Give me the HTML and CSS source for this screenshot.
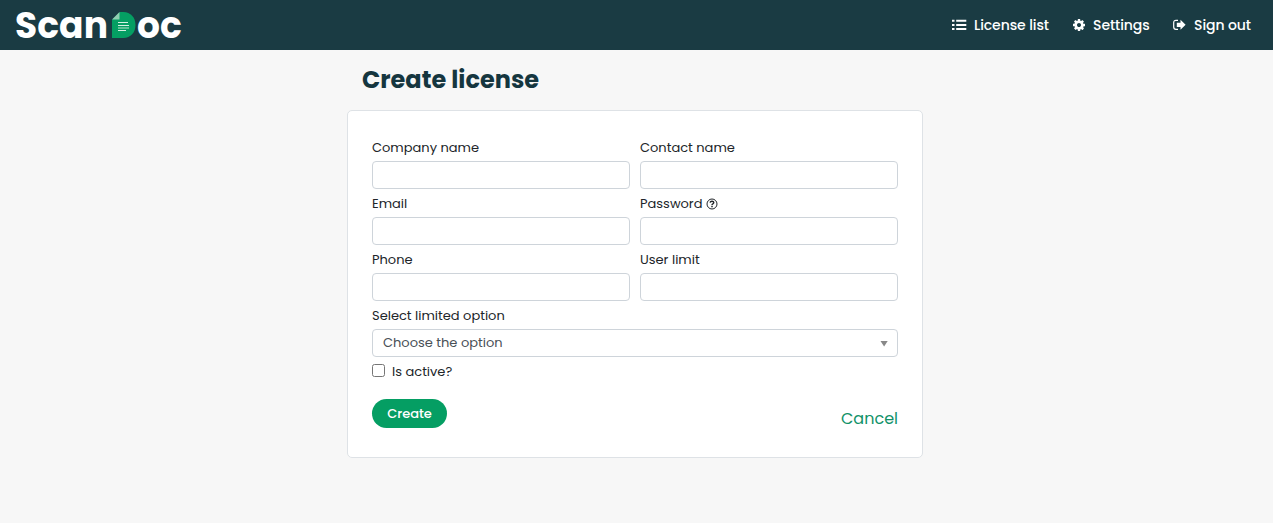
FILE: index.html
```html
<!DOCTYPE html>
<html lang="en">
<head>
<meta charset="utf-8">
<title>ScanDoc - Create license</title>
<link rel="stylesheet" href="styles.css">
</head>
<body>
<header class="navbar">
  <a class="logo" aria-label="ScanDoc">
    <span class="logo-scan">Scan</span>
    <svg class="logo-mark" width="24" height="26" viewBox="0 0 24 26">
      <path d="M8 0H11.500C18.500 0 23.500 5.500 23.500 13S18.500 26 11.500 26H0V8Z" fill="#059e63"/>
      <path d="M7.500 0V7.500H0Z" fill="#8fceb0"/>
      <path d="M6 10.500H16M6 13.500H17M6 18.500H14" stroke="#d5f0e3" stroke-width="1"/>
      <path d="M6 16H17" stroke="#7fcba9" stroke-width="1.500"/>
    </svg>
    <span class="logo-oc">oc</span>
  </a>
  <nav class="menu">
    <a class="menu-item">
      <svg width="15" height="12" viewBox="0 0 15 12" fill="#fff"><path d="M0 .7h2.500v2H0zM0 4.900h2.500v2H0zM0 9.100h2.500v2H0zM4.200.7H14.300v2H4.200zM4.200 4.900H14.300v2H4.200zM4.200 9.100H14.300v2H4.200z"/></svg>
      <span class="t-list">License list</span>
    </a>
    <a class="menu-item item-settings">
      <svg width="12" height="12" viewBox="0 0 1536 1536" fill="#fff"><path d="M1024 768q0-106-75-181t-181-75-181 75-75 181 75 181 181 75 181-75 75-181zm512-109v222q0 12-8 23t-20 13l-185 28q-19 54-39 91 35 50 107 138 10 12 10 25t-9 23q-27 37-99 108t-94 71q-12 0-26-9l-138-108q-44 23-91 38-16 136-29 186-7 28-36 28H657q-14 0-24.500-8.500T621 1506l-28-184q-49-16-90-37l-141 107q-10 9-25 9-14 0-25-11-126-114-165-168-7-10-7-23 0-12 8-23 15-21 51-66.500t54-70.500q-27-50-41-99L29 913q-13-2-21-12.500T0 877V655q0-12 8-23t19-13l186-28q14-46 39-92-40-57-107-138-10-12-10-24 0-10 9-23 26-36 98.500-107.500T337 135q13 0 26 10l138 107q44-23 91-38 16-136 29-186 7-28 36-28h222q14 0 24.500 8.500T915 30l28 184q49 16 90 37l142-107q9-9 24-9 13 0 25 10 129 119 165 170 7 8 7 22 0 12-8 23-15 21-51 66.500t-54 70.500q26 50 41 98l183 28q13 2 21 12.500t8 23.500z"/></svg>
      <span class="t-settings">Settings</span>
    </a>
    <a class="menu-item item-out">
      <svg width="13" height="12" viewBox="0 0 13 12"><path d="M5 1.300H3Q.7 1.300.7 3.600V8Q.7 10.300 3 10.300H5" fill="none" stroke="#fff" stroke-width="1.200"/><path d="M7.500.8 12.600 5.800 7.500 10.800V7.900H3.800V3.700H7.500Z" fill="#fff"/></svg>
      <span class="t-out">Sign out</span>
    </a>
  </nav>
</header>
<main class="page">
  <h1 class="title">Create license</h1>
  <form class="card">
    <div class="grid">
      <label class="field"><span class="label">Company name</span><input class="input" type="text"></label>
      <label class="field"><span class="label">Contact name</span><input class="input" type="text"></label>
      <label class="field"><span class="label">Email</span><input class="input" type="text"></label>
      <label class="field"><span class="label">Password
        <svg class="help" width="12" height="12" viewBox="0 0 12 12" fill="none" stroke="#212529"><circle cx="6" cy="6" r="5"/><path d="M4.100 4.700Q4.300 3.200 6 3.200T7.800 4.600Q7.800 5.400 6.900 5.800T6 7" stroke-width="1.400"/><path d="M6 7.800V9.200" stroke-width="1.500"/></svg></span><input class="input" type="password"></label>
      <label class="field"><span class="label">Phone</span><input class="input" type="text"></label>
      <label class="field"><span class="label">User limit</span><input class="input" type="text"></label>
      <div class="field wide"><span class="label">Select limited option</span>
        <div class="input select"><span>Choose the option</span>
          <svg width="8" height="6" viewBox="0 0 8 6"><path d="M.5 0H7.700L4.100 5.600Z" fill="#888"/></svg>
        </div>
      </div>
    </div>
    <label class="check"><input class="checkbox" type="checkbox"><span>Is active?</span></label>
    <div class="actions">
      <button class="create" type="button">Create</button>
      <a class="cancel">Cancel</a>
    </div>
  </form>
</main>
</body>
</html>
```
FILE: styles.css
```css
* { box-sizing: border-box; }
body {
  margin: 0;
  background: #f7f7f7;
  color: #212529;
  font-family: Poppins, Inter, "Open Sans", sans-serif;
  font-size: 13px;
}
.navbar {
  height: 50px;
  padding: 0 22px 0 15px;
  display: flex;
  justify-content: space-between;
  align-items: center;
  background: #1a3b43;
  color: #fff;
}
.logo { display: flex; align-items: center; font-size: 36px; font-weight: 700; line-height: 50px; }
.logo-scan { width: 97px; letter-spacing: .1px; padding-top: 1px; }
.logo-mark { margin-right: 1px; }
.logo-oc { width: 45px; padding-top: 1px; }
.menu { display: flex; align-items: center; font-size: 14px; font-weight: 500; line-height: 20px; letter-spacing: -.08px; }
.menu-item { display: flex; align-items: center; gap: 7px; white-space: nowrap; }
.item-settings { margin-left: 24px; gap: 8px; }
.item-out { margin-left: 24px; gap: 8px; }
.t-list { width: 75px; }
.t-settings { width: 56px; }
.t-out { width: 57px; }
.page { width: 576px; margin-left: 347px; }
.title { margin: 0; height: 60px; padding: 12px 15px 0; color: #15363f; font-size: 24px; line-height: 36px; font-weight: 700; }
.card {
  height: 348px;
  padding: 27px 24px 0;
  background: #fff;
  border: 1px solid #dee2e6;
  border-radius: 5px;
}
.grid { display: grid; grid-template-columns: 258px 258px; column-gap: 10px; }
.field { display: block; height: 56px; white-space: nowrap; }
.wide { grid-column: 1 / 3; }
.label { display: flex; align-items: center; gap: 3px; height: 20px; margin-bottom: 3px; line-height: 20px; }
.help { margin-bottom: 1px; }
.input {
  display: block;
  width: 100%;
  height: 28px;
  border: 1px solid #ced4da;
  border-radius: 4px;
  background: #fff;
}
.select { display: flex; align-items: center; justify-content: space-between; padding: 0 9px 0 10px; color: #495057; }
.select svg { margin-top: 2px; }
.check { display: flex; align-items: center; gap: 7px; height: 20px; }
.checkbox { width: 13px; height: 13px; margin: 0 0 3px; }
.actions { display: flex; justify-content: space-between; margin-top: 17px; }
.create {
  width: 75px;
  height: 29px;
  padding: 0;
  border: 0;
  border-radius: 15px;
  background: #059e63;
  color: #fff;
  font: inherit;
  font-weight: 500;
}
.cancel { margin-top: 8px; color: #119269; font-size: 16px; line-height: 24px; }
```
